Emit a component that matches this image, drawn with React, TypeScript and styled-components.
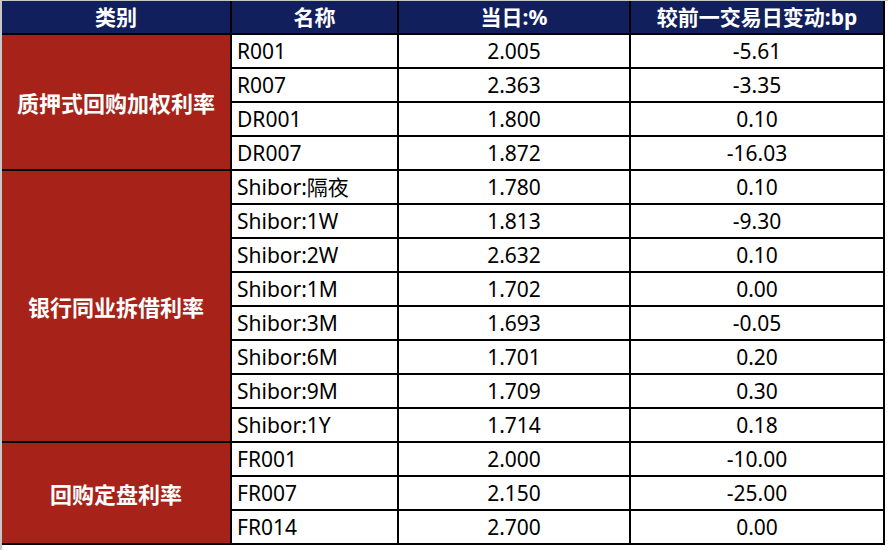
import React from "react";
import styled, { createGlobalStyle } from "styled-components";

const Global = createGlobalStyle`
  html, body { margin: 0; padding: 0; background: #ffffff; }
  body { font-family: "Noto Sans", "Noto Sans CJK SC", sans-serif; }
`;

const Page = styled.div`
  height: 550px;
  box-sizing: border-box;
  border-top: 1px solid #c8c8c8;
  border-left: 2px solid #c8c8c8;
  background: #ffffff;
`;

const Table = styled.table`
  border-collapse: separate;
  border-spacing: 0;
  table-layout: fixed;
  width: 883px;
  font-family: "Noto Sans", "Noto Sans CJK SC", sans-serif;
`;

const HeadCell = styled.th`
  box-sizing: border-box;
  height: 34px;
  padding: 0;
  background: #11205c;
  color: #ffffff;
  font-weight: 700;
  font-size: 21px;
  text-align: center;
  vertical-align: middle;
  border-right: 2px solid #000;
  border-bottom: 2px solid #000;
  line-height: 1;
  white-space: nowrap;
`;

const CategoryCell = styled.td`
  box-sizing: border-box;
  padding: 0;
  background: #a7231a;
  color: #ffffff;
  font-weight: 700;
  font-size: 22px;
  text-align: center;
  vertical-align: middle;
  border-right: 2px solid #000;
  border-bottom: 2px solid #000;
  white-space: nowrap;
`;

const Cell = styled.td<{ $align?: "left" | "center" }>`
  box-sizing: border-box;
  height: 34px;
  padding: ${(p) => (p.$align === "left" ? "0 0 0 5px" : "0")};
  background: #ffffff;
  color: #000000;
  font-size: 21px;
  text-align: ${(p) => p.$align ?? "center"};
  vertical-align: middle;
  border-right: 2px solid #000;
  border-bottom: 2px solid #000;
  line-height: 1;
  white-space: nowrap;
`;

type Row = { name: string; today: string; change: string };
type Group = { category: string; rows: Row[] };

const groups: Group[] = [
  {
    category: "质押式回购加权利率",
    rows: [
      { name: "R001", today: "2.005", change: "-5.61" },
      { name: "R007", today: "2.363", change: "-3.35" },
      { name: "DR001", today: "1.800", change: "0.10" },
      { name: "DR007", today: "1.872", change: "-16.03" },
    ],
  },
  {
    category: "银行同业拆借利率",
    rows: [
      { name: "Shibor:隔夜", today: "1.780", change: "0.10" },
      { name: "Shibor:1W", today: "1.813", change: "-9.30" },
      { name: "Shibor:2W", today: "2.632", change: "0.10" },
      { name: "Shibor:1M", today: "1.702", change: "0.00" },
      { name: "Shibor:3M", today: "1.693", change: "-0.05" },
      { name: "Shibor:6M", today: "1.701", change: "0.20" },
      { name: "Shibor:9M", today: "1.709", change: "0.30" },
      { name: "Shibor:1Y", today: "1.714", change: "0.18" },
    ],
  },
  {
    category: "回购定盘利率",
    rows: [
      { name: "FR001", today: "2.000", change: "-10.00" },
      { name: "FR007", today: "2.150", change: "-25.00" },
      { name: "FR014", today: "2.700", change: "0.00" },
    ],
  },
];

export default function App() {
  return (
    <>
      <Global />
      <Page>
        <Table>
          <colgroup>
            <col style={{ width: 230 }} />
            <col style={{ width: 167 }} />
            <col style={{ width: 232 }} />
            <col style={{ width: 254 }} />
          </colgroup>
          <thead>
            <tr>
              <HeadCell>类别</HeadCell>
              <HeadCell>名称</HeadCell>
              <HeadCell>当日:%</HeadCell>
              <HeadCell>较前一交易日变动:bp</HeadCell>
            </tr>
          </thead>
          <tbody>
            {groups.map((g) =>
              g.rows.map((r, i) => (
                <tr key={r.name}>
                  {i === 0 && (
                    <CategoryCell rowSpan={g.rows.length}>{g.category}</CategoryCell>
                  )}
                  <Cell $align="left">{r.name}</Cell>
                  <Cell>{r.today}</Cell>
                  <Cell>{r.change}</Cell>
                </tr>
              ))
            )}
          </tbody>
        </Table>
      </Page>
    </>
  );
}
